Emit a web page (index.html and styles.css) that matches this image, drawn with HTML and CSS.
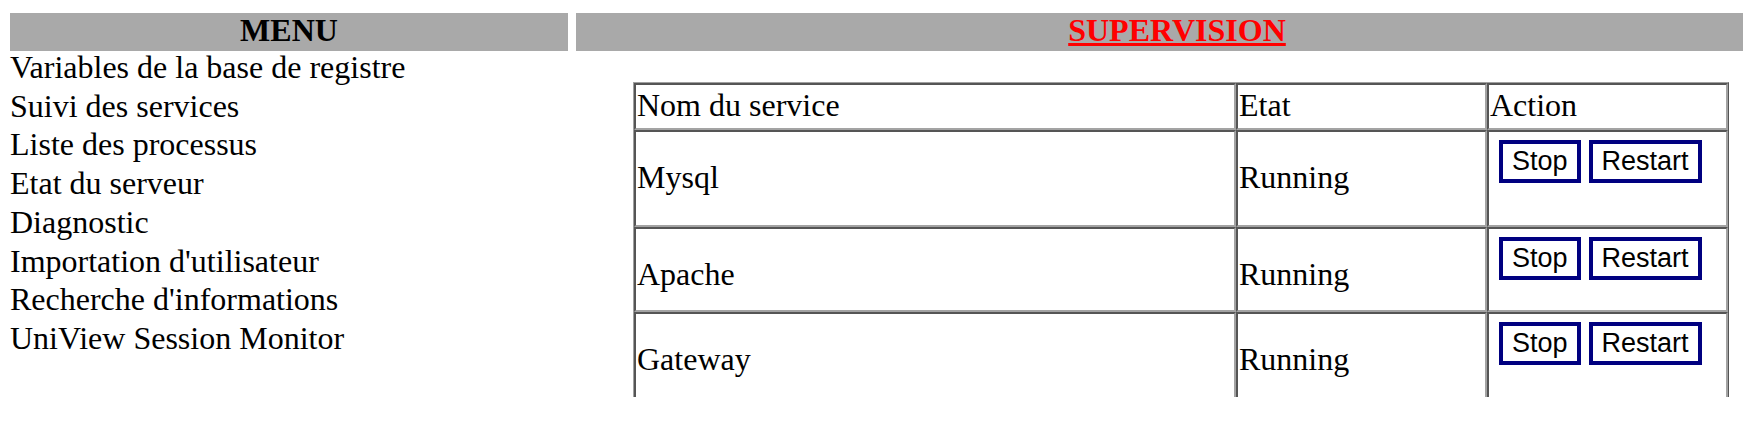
FILE: index.html
```html
<!DOCTYPE html>
<html lang="fr">
<head>
<meta charset="utf-8">
<title>Supervision</title>
<link rel="stylesheet" href="styles.css">
</head>
<body>
<div class="page">
  <aside class="menu">
    <div class="bar"><span class="bar-title">MENU</span></div>
    <ul class="menu-list">
      <li>Variables de la base de registre</li>
      <li>Suivi des services</li>
      <li>Liste des processus</li>
      <li>Etat du serveur</li>
      <li>Diagnostic</li>
      <li>Importation d'utilisateur</li>
      <li>Recherche d'informations</li>
      <li>UniView Session Monitor</li>
    </ul>
  </aside>
  <main class="main">
    <div class="bar"><a class="bar-link" href="#">SUPERVISION</a></div>
    <table class="services">
      <thead>
        <tr>
          <th class="c-name">Nom du service</th>
          <th class="c-state">Etat</th>
          <th class="c-action">Action</th>
        </tr>
      </thead>
      <tbody>
        <tr class="row-tall">
          <td>Mysql</td>
          <td>Running</td>
          <td class="action"><div class="actions"><button class="btn">Stop</button><button class="btn">Restart</button></div></td>
        </tr>
        <tr>
          <td>Apache</td>
          <td>Running</td>
          <td class="action"><div class="actions"><button class="btn">Stop</button><button class="btn">Restart</button></div></td>
        </tr>
        <tr class="row-tall">
          <td>Gateway</td>
          <td>Running</td>
          <td class="action"><div class="actions"><button class="btn">Stop</button><button class="btn">Restart</button></div></td>
        </tr>
      </tbody>
    </table>
  </main>
</div>
</body>
</html>
```
FILE: styles.css
```css
html, body {
  margin: 0;
  padding: 0;
  overflow: hidden;
  background: #ffffff;
}

body {
  font-family: "Liberation Serif", "Times New Roman", serif;
  font-size: 32px;
  color: #000000;
}

.page {
  display: flex;
  align-items: flex-start;
  padding: 13px 0 0 10px;
  width: max-content;
}

.menu {
  width: 558px;
  flex-shrink: 0;
}

.bar {
  height: 38px;
  background: #a9a9a9;
  text-align: center;
  font-weight: bold;
  line-height: 34px;
}

.menu-list {
  list-style: none;
  margin: -3px 0 0;
  padding: 0;
  line-height: 38.7px;
}

.main {
  width: 1202px;
  flex-shrink: 0;
  margin-left: 8px;
  height: 384px;
  overflow: hidden;
}

.bar-link {
  color: #ff0000;
  text-decoration: underline;
}

.services {
  margin: 31px 0 0 57px;
  width: 1096px;
  table-layout: fixed;
  border-collapse: separate;
  border-spacing: 0;
  border: 1px solid;
  border-color: #a0a0a0 #555555 #555555 #a0a0a0;
}

.services th,
.services td {
  font-weight: normal;
  text-align: left;
  padding: 1px;
  border: 2px solid;
  border-color: #555555 #a3a3a3 #a3a3a3 #555555;
  box-sizing: border-box;
  line-height: 38.7px;
  vertical-align: top;
}

.services th {
  padding-bottom: 3px;
}

.services td {
  padding-top: 26px;
}

.c-name { width: 602px; }
.c-state { width: 251px; }
.c-action { width: 241px; }

.services td.action {
  padding-top: 1px;
}

.actions {
  display: flex;
  align-items: flex-start;
  gap: 8px;
  box-sizing: border-box;
  height: 79px;
  padding: 7px 0 0 9px;
}

.row-tall .actions {
  height: 91px;
}

.btn {
  font-family: "Liberation Sans", Arial, Helvetica, sans-serif;
  font-size: 27px;
  line-height: 1;
  height: 43px;
  padding: 0 9px;
  margin: 0;
  border: 4px solid #000080;
  border-radius: 0;
  background: #ffffff;
  color: #000000;
  box-sizing: border-box;
}
```
